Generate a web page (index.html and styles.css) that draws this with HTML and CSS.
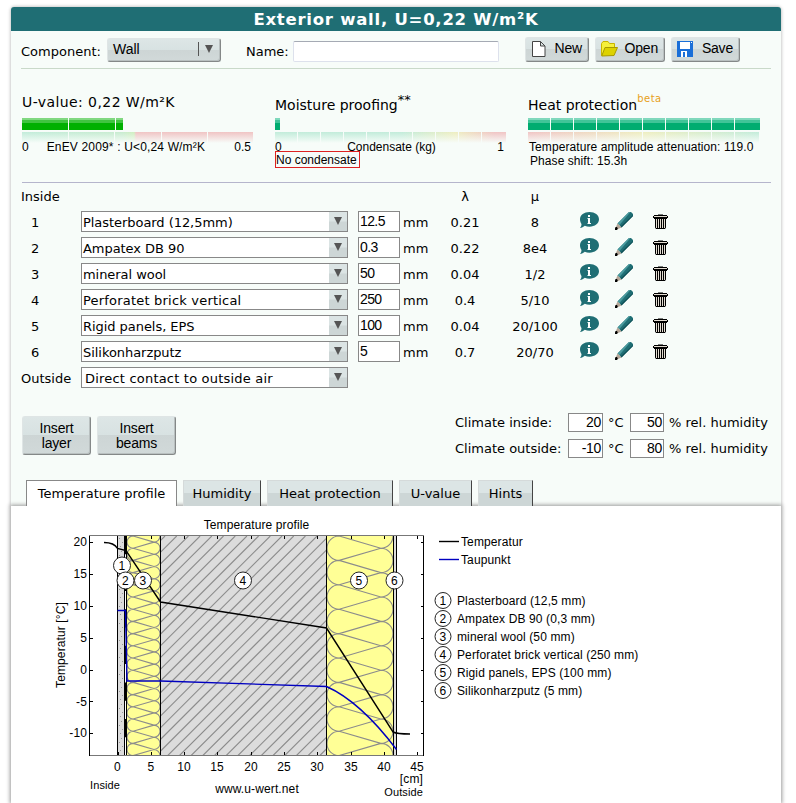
FILE: index.html
```
<!DOCTYPE html>
<html lang="en">

<head>
    <meta charset="UTF-8">
    <meta name="viewport" content="width=device-width, initial-scale=1.0">
    <title>Exterior wall, U=0,22 W/m²K</title>
    <link rel="stylesheet" href="styles.css">
</head>

<body>
    <!-- shared icons -->
    <svg class="defs" width="0" height="0">
        <symbol id="info" viewBox="0 0 19 16">
            <path fill="#1f6e74" d="M9.5 0C14.8 0 19 3 19 7.3s-4.2 7.4-9.5 7.4c-1.8 0-3.3-.3-4.7-.9C3.500 15 1.800 15.800 0 15.900 1 14.900 1.500 13.500 1.500 12 .6 10.700 0 9 0 7.300 0 3 4.200 0 9.500 0z" />
            <path fill="#fff" d="M8 3h2v2H8zM7.500 6H10v5h1v1H7.500v-1H8V7h-.5z" />
        </symbol>
        <symbol id="pencil" viewBox="0 0 18 18">
            <path fill="#1f6e74" d="M14 0h2l2 2v2L6.500 15.500 2.500 11.500z" />
            <path fill="#4a9a9e" d="M14 0h1.500L4.500 13 2.500 11.500z" />
            <path fill="#0f4f55" d="M18 3v1L6.500 15.500 5.500 14.500z" />
            <path fill="#b5a698" d="M2.500 11.500l4 4L2 17.500 0.500 16z" />
            <path fill="#000" d="M0.600 15H2l.8 1.600L2 18H0v-1.500z" />
        </symbol>
        <symbol id="trash" viewBox="0 0 15 16">
            <path fill="#000" d="M5 0.500h5V1h4v1h1v2h-1v1h-1v8.500L12 15H3l-1-1.500V5H1V4H0V2h1V1h4z" />
            <path fill="#e4ddd2" d="M1 2h13v1H1zM3 5h1v9H3zM5 5h1v9H5zM7 5h1v9H7zM9 5h1v9H9zM11 5h1v9h-1z" />
        </symbol>
    </svg>

    <div class="panel">
        <h1 class="title">Exterior wall, U=0,22 W/m²K</h1>

        <div class="toolbar">
            <label class="component-label">Component:</label>
            <div class="btn component">Wall <i></i><span class="arrow"></span></div>
            <label class="name-label">Name:</label>
            <input class="name" type="text">
            <div class="btn file-btn">
                <svg width="14" height="16" viewBox="0 0 14 16">
                    <path fill="#fff" stroke="#444" d="M.5.500h8l4.500 4.500v10.500H.5zM8.500.500v4.500H13" />
                </svg>
                <span>New</span>
            </div>
            <div class="btn file-btn open">
                <svg width="17" height="16" viewBox="0 0 17 16">
                    <path fill="#f5f03c" stroke="#c8b400" d="M.5 14.500V2.500l1.500-2h5l1.500 2h5v4" />
                    <path fill="#ddd200" stroke="#a89a00" d="M.7 15L4 6.500h12.500L13 14.500z" />
                </svg>
                <span>Open</span>
            </div>
            <div class="btn file-btn save">
                <svg width="16" height="16" viewBox="0 0 16 16">
                    <path fill="#1a6fd8" d="M0 0h16v16H0z" />
                    <path fill="#fff" d="M3 1h10v7H3zM4 10h8v6H4zM14 1h1v1h-1z" />
                    <path fill="#1a6fd8" d="M6 11h2v5H6zM10 10h2v6h-2z" />
                </svg>
                <span>Save</span>
            </div>
        </div>

        <div class="gauges">
            <div class="gauge">
                <h2 class="wide">U-value: 0,22 W/m²K</h2>
                <div class="bar green"><div style="width: 101px"></div></div>
                <div class="scale u-scale"></div>
                <div class="legend"><span>0</span><span class="enev">EnEV 2009* : U&lt;0,24 W/m²K</span><span>0.5</span></div>
            </div>
            <div class="gauge">
                <h2 class="low">Moisture proofing<sup>**</sup></h2>
                <div class="bar"><div style="width: 5px"></div></div>
                <div class="scale moist-scale"></div>
                <div class="legend"><span>0</span><span class="cond">Condensate (kg)</span><span>1</span></div>
                <div class="note">No condensate</div>
            </div>
            <div class="gauge">
                <h2 class="low">Heat protection<sup class="beta">beta</sup></h2>
                <div class="bar"><div style="width: 232px"></div></div>
                <div class="scale heat-scale"></div>
                <div class="legend heat">Temperature amplitude attenuation: 119.0</div>
                <div class="phase">Phase shift: 15.3h</div>
            </div>
        </div>

        <div class="layers">
            <div class="row head">
                <span>Inside</span><span></span><span></span><span></span>
                <span class="c">λ</span><span class="c">μ</span>
            </div>
            <div class="row">
                <span class="num">1</span>
                <div class="select">Plasterboard (12,5mm)<b><span class="arrow"></span></b></div>
                <div class="thick">12.5</div><span>mm</span>
                <span class="c">0.21</span><span class="c">8</span>
                <svg class="info"><use href="#info" /></svg>
                <svg class="pencil"><use href="#pencil" /></svg>
                <svg class="trash"><use href="#trash" /></svg>
            </div>
            <div class="row">
                <span class="num">2</span>
                <div class="select">Ampatex DB 90<b><span class="arrow"></span></b></div>
                <div class="thick">0.3</div><span>mm</span>
                <span class="c">0.22</span><span class="c">8e4</span>
                <svg class="info"><use href="#info" /></svg>
                <svg class="pencil"><use href="#pencil" /></svg>
                <svg class="trash"><use href="#trash" /></svg>
            </div>
            <div class="row">
                <span class="num">3</span>
                <div class="select">mineral wool<b><span class="arrow"></span></b></div>
                <div class="thick">50</div><span>mm</span>
                <span class="c">0.04</span><span class="c">1/2</span>
                <svg class="info"><use href="#info" /></svg>
                <svg class="pencil"><use href="#pencil" /></svg>
                <svg class="trash"><use href="#trash" /></svg>
            </div>
            <div class="row">
                <span class="num">4</span>
                <div class="select spaced">Perforatet brick vertical<b><span class="arrow"></span></b></div>
                <div class="thick">250</div><span>mm</span>
                <span class="c">0.4</span><span class="c">5/10</span>
                <svg class="info"><use href="#info" /></svg>
                <svg class="pencil"><use href="#pencil" /></svg>
                <svg class="trash"><use href="#trash" /></svg>
            </div>
            <div class="row">
                <span class="num">5</span>
                <div class="select">Rigid panels, EPS<b><span class="arrow"></span></b></div>
                <div class="thick">100</div><span>mm</span>
                <span class="c">0.04</span><span class="c">20/100</span>
                <svg class="info"><use href="#info" /></svg>
                <svg class="pencil"><use href="#pencil" /></svg>
                <svg class="trash"><use href="#trash" /></svg>
            </div>
            <div class="row">
                <span class="num">6</span>
                <div class="select">Silikonharzputz<b><span class="arrow"></span></b></div>
                <div class="thick">5</div><span>mm</span>
                <span class="c">0.7</span><span class="c">20/70</span>
                <svg class="info"><use href="#info" /></svg>
                <svg class="pencil"><use href="#pencil" /></svg>
                <svg class="trash"><use href="#trash" /></svg>
            </div>
            <div class="row">
                <span>Outside</span>
                <div class="select spaced outside">Direct contact to outside air<b><span class="arrow"></span></b></div>
            </div>
        </div>

        <div class="actions">
            <div class="btn insert">Insert<br>layer</div>
            <div class="btn insert beams">Insert<br>beams</div>
            <div class="climate">
                <span>Climate inside:</span><div class="val">20</div><span class="deg">°C</span><div class="val hum">50</div><span class="deg">% rel. humidity</span>
                <span>Climate outside:</span><div class="val">-10</div><span class="deg">°C</span><div class="val hum">80</div><span class="deg">% rel. humidity</span>
            </div>
        </div>

        <div class="tabs">
            <div class="tab active">Temperature profile</div>
            <div class="tab humidity">Humidity</div>
            <div class="tab protection">Heat protection</div>
            <div class="tab uvalue">U-value</div>
            <div class="tab hints">Hints</div>
        </div>
    </div>

    <div class="chart">
        <svg width="770" height="297" viewBox="11 506 770 297">
            <defs>
                <clipPath id="wall">
                    <path d="M117 536h280v219.500H117z" />
                </clipPath>
                <clipPath id="brick-clip">
                    <path d="M160.500 536h166v219.500h-166z" />
                </clipPath>
                <pattern id="plaster" width="8" height="17" patternUnits="userSpaceOnUse" x="117" y="536">
                    <path fill="#999" d="M2 2h1v1H2zM5 6h1v1H5zM3 10h1v1H3zM4 15h1v1H4z" />
                </pattern>
            </defs>

            <!-- wall layers -->
            <g clip-path="url(#wall)">
                <path fill="#dcdcdc" d="M117.500 536h7v220h-7zM160.500 536h166v220h-166zM393.500 536h3.500v220h-3.500z" />
                <path fill="#ffff96" d="M127 536h33.500v220H127zM326.500 536h67v220h-67z" />
                <path fill="url(#plaster)" d="M117.500 536h7v220h-7z" />
                <path class="hatch" id="wool3" />
                <path class="hatch" id="wool5" />
                <path class="hatch" id="brick" clip-path="url(#brick-clip)" />
                <path stroke="#000" d="M117.500 536v220M126.500 536v220M160.500 536v220M326.500 536v220M393.500 536v220M396.500 536v220" />
                <path stroke="#000" stroke-width="2" stroke-dasharray="18.300 18.300" d="M125.500 536v220" />
                <path stroke="#000" d="M124.500 536v220" />
            </g>

            <!-- frame and ticks -->
            <path fill="none" stroke="#777" d="M89 535.500H424M89 755.500H424" />
            <path fill="none" stroke="#000" d="M89.500 536V756M423.500 536V756" />
            <path stroke="#000" d="M90 542.500h3M90 574.500h3M90 606.500h3M90 638.500h3M90 670.500h3M90 701.500h3M90 733.500h3M421 542.500h3M421 574.500h3M421 606.500h3M421 638.500h3M421 670.500h3M421 701.500h3M421 733.500h3" />
            <path stroke="#000" d="M151.500 536v3M184.500 536v3M217.500 536v3M251.500 536v3M284.500 536v3M317.500 536v3M351.500 536v3M384.500 536v3M417.500 536v3M118.500 752v3M151.500 752v3M184.500 752v3M217.500 752v3M251.500 752v3M284.500 752v3M317.500 752v3M351.500 752v3M384.500 752v3M417.500 752v3" />

            <!-- curves -->
            <path class="taupunkt" d="M117.500 610.500H125.500L127 681H160.500L326.500 686.500C350 697 375 721 396.500 749.500" />
            <path class="temperatur" d="M104 542.500C110 542.500 115 544 117.500 548.500L126 550.500L160.500 602L326.500 628L393 732C396 733.500 402 734 410 734" />

            <g class="badges">
                <circle cx="122" cy="565.500" r="8.500" /><circle cx="125.500" cy="580.500" r="8.500" />
                <circle cx="143" cy="580.500" r="8.500" /><circle cx="243" cy="580.500" r="8.500" />
                <circle cx="359" cy="580.500" r="8.500" /><circle cx="394.500" cy="580.500" r="8.500" />
                <circle cx="443" cy="600.500" r="8" /><circle cx="443" cy="618.500" r="8" />
                <circle cx="443" cy="636.500" r="8" /><circle cx="443" cy="654.500" r="8" />
                <circle cx="443" cy="672.500" r="8" /><circle cx="443" cy="690.500" r="8" />
            </g>
            <g text-anchor="middle">
                <text x="122" y="570">1</text><text x="125.500" y="585">2</text><text x="143" y="585">3</text>
                <text x="243" y="585">4</text><text x="359" y="585">5</text><text x="394.500" y="585">6</text>
                <text x="443" y="605">1</text><text x="443" y="623">2</text><text x="443" y="641">3</text>
                <text x="443" y="659">4</text><text x="443" y="677">5</text><text x="443" y="695">6</text>
                <text x="256.500" y="529">Temperature profile</text>
                <text x="117.500" y="771">0</text><text x="151" y="771">5</text><text x="184" y="771">10</text>
                <text x="217" y="771">15</text><text x="251" y="771">20</text><text x="284" y="771">25</text>
                <text x="317" y="771">30</text><text x="351" y="771">35</text><text x="384" y="771">40</text>
                <text x="417" y="771">45</text>
                <text x="257" y="793">www.u-wert.net</text>
                <text transform="translate(65 645) rotate(-90)">Temperatur [°C]</text>
            </g>
            <g text-anchor="end">
                <text x="87" y="546">20</text><text x="87" y="578">15</text><text x="87" y="610">10</text>
                <text x="87" y="642">5</text><text x="87" y="674">0</text><text x="87" y="706">-5</text>
                <text x="87" y="737">-10</text>
                <text x="423" y="783">[cm]</text>
                <text class="small" x="423" y="796">Outside</text>
            </g>
            <text class="small" x="90" y="789">Inside</text>

            <!-- legend -->
            <path class="temperatur" d="M439 541.500h20" />
            <path class="taupunkt" d="M439 559.500h20" />
            <text x="461" y="546">Temperatur</text>
            <text x="461" y="564">Taupunkt</text>
            <text x="457" y="605">Plasterboard (12,5 mm)</text>
            <text x="457" y="623">Ampatex DB 90 (0,3 mm)</text>
            <text x="457" y="641">mineral wool (50 mm)</text>
            <text x="457" y="659">Perforatet brick vertical (250 mm)</text>
            <text x="457" y="677">Rigid panels, EPS (100 mm)</text>
            <text x="457" y="695">Silikonharzputz (5 mm)</text>
        </svg>
    </div>

    <script>
        // insulation hatch: one loop line going down, r = loop radius
        function wool(left, right, r) {
            let d = ""
            for (let y = 536 - 2 * r; y < 756; y += 2 * r) {
                d += `M${left + r} ${y}A${r} ${r} 0 0 0 ${left + r} ${y + 2 * r}`
                d += `L${right - r} ${y + r}A${r} ${r} 0 0 1 ${right - r} ${y + 3 * r}L${left + r} ${y + 2 * r}`
            }
            return d
        }

        // diagonal lines
        function brick() {
            let d = ""
            for (let x = 165; x < 550; x += 11.7) {
                d += `M${x} 536l-220 220`
            }
            return d
        }

        document.getElementById("wool3").setAttribute("d", wool(127, 160, 6.1))
        document.getElementById("wool5").setAttribute("d", wool(327, 393, 12.2))
        document.getElementById("brick").setAttribute("d", brick())
    </script>
</body>

</html>
```
FILE: styles.css
```
* {
    box-sizing: border-box;
}

body {
    margin: 0;
    padding: 7px 15px 0 11px;
    height: 803px;
    overflow: hidden;
    background: #fff;
    font-family: Verdana, "DejaVu Sans", sans-serif;
    font-size: 13px;
    line-height: 16px;
    color: #000;
}

.defs {
    display: block;
}

.panel {
    width: 770px;
    height: 499px;
    background: #f7fcf9;
    border-radius: 4px 4px 0 0;
    box-shadow: 0 0 3px 1px #ccc;
}

.title {
    height: 24px;
    margin: 0;
    border-radius: 3px 3px 0 0;
    background: #1f6e74;
    color: #fff;
    font-size: 16.5px;
    line-height: 26px;
    text-align: center;
    letter-spacing: 0.75px;
}

/* buttons */
.btn {
    background: linear-gradient(#dde6e6, #d8e2e2 48%, #cdd5d5 49%, #d1d9d9);
    border: 1px solid #dfe5e5;
    border-right-color: #848888;
    border-bottom-color: #848888;
    border-radius: 3px;
    box-shadow: inset -1px -1px 0 #b9c0c0;
    font: 14px/15px "Liberation Sans", Arial, sans-serif;
}

.arrow {
    display: block;
    width: 0;
    border: 4px solid transparent;
    border-top: 8px solid #555;
    border-bottom: 0;
}

/* toolbar */
.toolbar {
    display: flex;
    align-items: flex-start;
    height: 38px;
    margin: 0 10px;
    border-bottom: 1px solid #c9d9c9;
}

.component-label {
    width: 86px;
    padding-top: 13px;
}

.component {
    display: flex;
    width: 114px;
    height: 24px;
    margin-top: 7px;
    padding: 3px 7px 0 5px;
}

.component i {
    width: 1px;
    height: 14px;
    margin: 0 6px 0 auto;
    background: #555;
}

.component .arrow {
    margin-top: 3px;
}

.name-label {
    width: 47px;
    margin-left: 25px;
    padding-top: 13px;
}

.name {
    width: 206px;
    height: 21px;
    margin-top: 10px;
    border: 1px solid #dde1ec;
    border-top-color: #a5aab4;
    border-radius: 2px;
    background: #fff;
}

.file-btn {
    display: flex;
    width: 64px;
    height: 25px;
    margin: 6px 0 0 26px;
    padding: 3px 0 0 6px;
}

.file-btn span {
    margin: 0 0 0 auto;
    padding-right: 6px;
    letter-spacing: -0.2px;
}

.open {
    width: 70px;
    margin-left: 6px;
    padding-left: 5px;
}

.save {
    width: 69px;
    margin-left: 6px;
    padding-left: 5px;
}

/* gauges */
.gauges {
    display: flex;
    gap: 22px;
    height: 114px;
    margin: 0 10px 0 11px;
    border-bottom: 1px solid #b5b5cc;
}

.gauge {
    width: 231px;
    font: 12px/14px "Liberation Sans", Arial, sans-serif;
}

.gauge h2 {
    height: 49px;
    margin: 0;
    padding-top: 23px;
    font: 14px/20px Verdana, "DejaVu Sans", sans-serif;
}

.gauge h2.wide {
    letter-spacing: 0.42px;
}

.gauge h2.low {
    padding-top: 26px;
}

.gauge sup {
    font-size: 13px;
    line-height: 0;
    vertical-align: 6px;
}

.gauge .beta {
    font-size: 10px;
    letter-spacing: 0.5px;
    vertical-align: 8px;
    color: #e8a020;
}

.bar {
    height: 12px;
    margin-bottom: 2px;
}

.bar div {
    height: 12px;
    background: repeating-linear-gradient(90deg, transparent 0 22px, #f7fcf9 22px 23px) 0 0 / 229px 100% no-repeat, linear-gradient(#80d8bc 0 2px, #40c498 2px 5px, #00ac70 5px);
}

.bar.green div {
    background: repeating-linear-gradient(90deg, transparent 0 46px, #f7fcf9 46px 47px), linear-gradient(#80d880 0 2px, #40c440 2px 5px, #00b000 5px);
}

.scale {
    height: 11px;
}

.u-scale {
    background: repeating-linear-gradient(90deg, transparent 0 45.2px, #f7fcf9 45.2px 46.2px) 1px 0 / 229px 100% no-repeat, linear-gradient(#f7fcf900, #f7fcf9), linear-gradient(90deg, #c2ecda, #c8ecd0 100px, #d0efc0 112px, #f0c4c4 114px);
}

.moist-scale {
    background: repeating-linear-gradient(90deg, transparent 0 22px, #f7fcf9 22px 23px) 0 0 / 229px 100% no-repeat, linear-gradient(#f7fcf900, #f7fcf9), linear-gradient(90deg, #c2ecda 55%, #eeeec0 78%, #f0c4c4 95%);
}

.heat-scale {
    background: repeating-linear-gradient(90deg, transparent 0 22px, #f7fcf9 22px 23px) 0 0 / 229px 100% no-repeat, linear-gradient(#f7fcf900, #f7fcf9), linear-gradient(90deg, #f0c4c4, #eeeec0 50%, #c2ecda);
}

.legend {
    display: flex;
    justify-content: space-between;
    height: 8px;
    margin-top: -3px;
    padding-right: 2px;
    line-height: 14px;
}

.enev {
    margin: 0 auto 0 18px;
    letter-spacing: 0.16px;
}

.cond {
    margin-left: 4px;
}

.note {
    width: 85px;
    height: 17px;
    margin-top: 3px;
    border: 1px solid #d22;
    line-height: 16px;
    white-space: nowrap;
}

.phase {
    margin-top: 6px;
    padding-left: 2px;
    letter-spacing: 0.07px;
}

.heat {
    padding-left: 1px;
    white-space: nowrap;
    letter-spacing: 0.08px;
}

/* layers */
.layers {
    margin: 0 10px;
}

.row {
    display: grid;
    grid-template-columns: 60px 277px 45px 27px 70px 70px 10px 35px 38px 20px;
    height: 26px;
    line-height: 27px;
}

.c {
    text-align: center;
}

.num {
    padding-left: 10px;
}

.select {
    display: flex;
    justify-content: space-between;
    width: 267px;
    height: 21px;
    margin-top: 2px;
    padding-left: 1px;
    border: 1px solid #888;
    background: #fff;
    line-height: 22px;
    letter-spacing: -0.05px;
}

.select b {
    width: 18px;
    padding: 5px 0 0 5px;
    background: linear-gradient(#dbe4e4 48%, #cdd6d6 52%);
}

.spaced {
    letter-spacing: 0.2px;
}

.outside {
    padding-left: 3px;
}

.thick,
.val {
    width: 42px;
    height: 21px;
    margin-top: 2px;
    padding-left: 1px;
    border: 1px solid #888;
    background: #fff;
    font: 14px/18px "Liberation Sans", Arial, sans-serif;
    letter-spacing: -0.6px;
}

.info {
    grid-column: 8;
    width: 19px;
    height: 16px;
    margin-top: 3px;
}

.pencil {
    width: 18px;
    height: 18px;
    margin-top: 3px;
}

.trash {
    width: 15px;
    height: 16px;
    margin-top: 5px;
}

/* insert buttons, climate */
.actions {
    display: flex;
    align-items: flex-start;
    height: 89px;
    padding: 25px 13px 0 11px;
}

.insert {
    width: 69px;
    height: 39px;
    padding-top: 4px;
    text-align: center;
    letter-spacing: -0.2px;
}

.beams {
    width: 79px;
    margin-left: 6px;
}

.climate {
    display: grid;
    grid-template-columns: 113px 40px 22px 39px auto;
    grid-auto-rows: 26px;
    margin: -4px 0 0 279px;
    line-height: 22px;
    white-space: nowrap;
}

.val {
    width: 35px;
    height: 19px;
    margin-top: 1px;
    padding: 0 1px 0 0;
    line-height: 17px;
    text-align: right;
    letter-spacing: -0.3px;
}

.hum {
    width: 34px;
}

.deg {
    line-height: 21px;
}

/* tabs */
.tabs {
    display: flex;
    gap: 6px;
    height: 26px;
    padding-left: 15px;
}

.tab {
    width: 78px;
    border: 1px solid #d5dada;
    border-right: 1px solid #444;
    border-bottom: 0;
    background: linear-gradient(#dce5e5 48%, #cdd6d6 50%);
    line-height: 26px;
    text-align: center;
}

.tab.active {
    width: 151px;
    border: 1px solid #888;
    border-bottom: 0;
    background: #fff;
}

.tab.protection {
    width: 126px;
}

.tab.uvalue {
    width: 73px;
}

.tab.hints {
    width: 55px;
}

/* chart */
.chart {
    width: 770px;
    height: 297px;
    background: #fff;
    box-shadow: 0 0 4px 1px #999;
}

.chart svg {
    display: block;
}

.chart text {
    font: 12px "Liberation Sans", Arial, sans-serif;
    letter-spacing: 0.12px;
}

.chart .small {
    font-size: 11px;
}

.hatch {
    fill: none;
    stroke: #8c8c8c;
    stroke-width: 1.1;
}

.temperatur,
.taupunkt {
    fill: none;
    stroke: #000;
    stroke-width: 1.4;
}

.taupunkt {
    stroke: #0000c0;
}

.badges circle {
    fill: #fff;
    stroke: #222;
}
```
